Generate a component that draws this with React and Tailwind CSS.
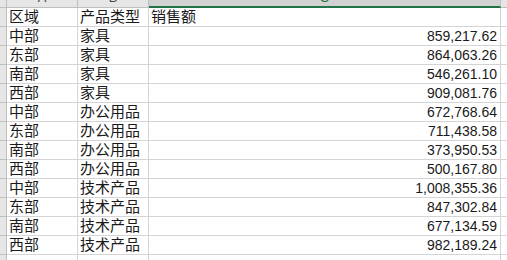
import React from "react";

const rows = [
  ["区域", "产品类型", "销售额"],
  ["中部", "家具", "859,217.62"],
  ["东部", "家具", "864,063.26"],
  ["南部", "家具", "546,261.10"],
  ["西部", "家具", "909,081.76"],
  ["中部", "办公用品", "672,768.64"],
  ["东部", "办公用品", "711,438.58"],
  ["南部", "办公用品", "373,950.53"],
  ["西部", "办公用品", "500,167.80"],
  ["中部", "技术产品", "1,008,355.36"],
  ["东部", "技术产品", "847,302.84"],
  ["南部", "技术产品", "677,134.59"],
  ["西部", "技术产品", "982,189.24"],
  ["", "", ""],
];

export default function App() {
  return (
    <div
      className="w-[507px] h-[260px] overflow-hidden bg-white text-[14px] text-[#1a1a1a]"
      style={{ fontFamily: '"Liberation Sans", "Noto Sans CJK SC", sans-serif' }}
    >
      <div className="flex h-[8px]">
        <div className="w-[7px] shrink-0 bg-[#e6e6e6] border-r border-b border-[#bfbfbf]" />
        <div className="w-[71px] shrink-0 bg-[#e6e6e6] border-r border-b border-[#bfbfbf] overflow-hidden flex justify-center">
          <span className="block -mt-[9px] leading-[14px] text-[13px] text-[#444]">A</span>
        </div>
        <div className="w-[71px] shrink-0 bg-[#e6e6e6] border-r border-b border-[#bfbfbf] overflow-hidden flex justify-center">
          <span className="block -mt-[9px] leading-[14px] text-[13px] text-[#444]">B</span>
        </div>
        <div className="w-[352px] shrink-0 bg-[#d2d2d2] border-r border-[#bfbfbf] border-b-2 border-b-[#217346] overflow-hidden flex justify-center">
          <span className="block -mt-[9px] leading-[14px] text-[13px] text-[#217346]">C</span>
        </div>
        <div className="flex-1 bg-[#e6e6e6] border-b border-[#bfbfbf]" />
      </div>
      {rows.map((r, i) => (
        <div key={i} className="flex h-[19px]">
          <div className="w-[7px] shrink-0 bg-[#e6e6e6] border-r border-b border-[#bfbfbf]" />
          <div className="w-[71px] shrink-0 border-r border-b border-[#d4d4d4] flex items-end pl-[2px] leading-[18px] text-[15px]">
            {r[0]}
          </div>
          <div className="w-[71px] shrink-0 border-r border-b border-[#d4d4d4] flex items-end pl-[2px] leading-[18px] text-[15px]">
            {r[1]}
          </div>
          <div
            className={`w-[352px] shrink-0 border-r border-b border-[#d4d4d4] flex items-end leading-[18px] ${
              i === 0 ? "justify-start pl-[2px] text-[15px]" : "justify-end pr-[3px]"
            }`}
          >
            {r[2]}
          </div>
          <div className="flex-1 border-b border-[#d4d4d4]" />
        </div>
      ))}
    </div>
  );
}
